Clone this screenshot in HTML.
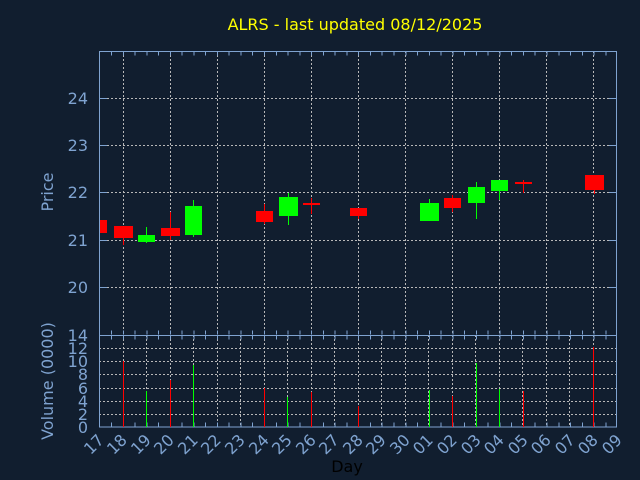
<!DOCTYPE html>
<html><head><meta charset="utf-8"><style>
html,body{margin:0;padding:0;background:#111e2f;}
svg{display:block;font-family:"DejaVu Sans","Liberation Sans",sans-serif;}
</style></head><body>
<svg width="640" height="480" viewBox="0 0 640 480" xmlns="http://www.w3.org/2000/svg">
<rect width="640" height="480" fill="#111e2f"/>
<text x="355" y="30" fill="#ffff00" font-size="16" text-anchor="middle">ALRS - last updated 08/12/2025</text>

<g stroke="#b8b8b8" stroke-width="1" stroke-dasharray="2 2" shape-rendering="crispEdges">
<line x1="99" y1="98.5" x2="617" y2="98.5"/>
<line x1="99" y1="145.5" x2="617" y2="145.5"/>
<line x1="99" y1="192.5" x2="617" y2="192.5"/>
<line x1="99" y1="240.5" x2="617" y2="240.5"/>
<line x1="99" y1="287.5" x2="617" y2="287.5"/>
<line x1="123.5" y1="51" x2="123.5" y2="335"/>
<line x1="170.5" y1="51" x2="170.5" y2="335"/>
<line x1="217.5" y1="51" x2="217.5" y2="335"/>
<line x1="264.5" y1="51" x2="264.5" y2="335"/>
<line x1="311.5" y1="51" x2="311.5" y2="335"/>
<line x1="358.5" y1="51" x2="358.5" y2="335"/>
<line x1="405.5" y1="51" x2="405.5" y2="335"/>
<line x1="452.5" y1="51" x2="452.5" y2="335"/>
<line x1="499.5" y1="51" x2="499.5" y2="335"/>
<line x1="546.5" y1="51" x2="546.5" y2="335"/>
<line x1="593.5" y1="51" x2="593.5" y2="335"/>
<line x1="99" y1="414.5" x2="617" y2="414.5"/>
<line x1="99" y1="401.5" x2="617" y2="401.5"/>
<line x1="99" y1="388.5" x2="617" y2="388.5"/>
<line x1="99" y1="374.5" x2="617" y2="374.5"/>
<line x1="99" y1="361.5" x2="617" y2="361.5"/>
<line x1="99" y1="348.5" x2="617" y2="348.5"/>
<line x1="123.5" y1="335" x2="123.5" y2="427"/><line x1="146.5" y1="335" x2="146.5" y2="427"/>
<line x1="170.5" y1="335" x2="170.5" y2="427"/><line x1="193.5" y1="335" x2="193.5" y2="427"/>
<line x1="217.5" y1="335" x2="217.5" y2="427"/><line x1="240.5" y1="335" x2="240.5" y2="427"/>
<line x1="264.5" y1="335" x2="264.5" y2="427"/><line x1="287.5" y1="335" x2="287.5" y2="427"/>
<line x1="311.5" y1="335" x2="311.5" y2="427"/><line x1="334.5" y1="335" x2="334.5" y2="427"/>
<line x1="358.5" y1="335" x2="358.5" y2="427"/><line x1="381.5" y1="335" x2="381.5" y2="427"/>
<line x1="405.5" y1="335" x2="405.5" y2="427"/><line x1="428.5" y1="335" x2="428.5" y2="427"/>
<line x1="452.5" y1="335" x2="452.5" y2="427"/><line x1="475.5" y1="335" x2="475.5" y2="427"/>
<line x1="499.5" y1="335" x2="499.5" y2="427"/><line x1="522.5" y1="335" x2="522.5" y2="427"/>
<line x1="546.5" y1="335" x2="546.5" y2="427"/><line x1="569.5" y1="335" x2="569.5" y2="427"/>
<line x1="593.5" y1="335" x2="593.5" y2="427"/>
</g>

<g stroke="#7fa3d0" stroke-width="1" fill="none" shape-rendering="crispEdges">
<rect x="99.5" y="51.5" width="517" height="375.5"/>
<line x1="99" y1="335.5" x2="617" y2="335.5"/>
</g>
<g stroke="#7fa3d0" stroke-width="1" shape-rendering="crispEdges">
<line x1="99" y1="53.5" x2="617" y2="53.5" stroke-width="4" stroke-dasharray="1 10.77" stroke-dashoffset="-12"/>
<line x1="99" y1="337.5" x2="617" y2="337.5" stroke-width="4" stroke-dasharray="1 10.77" stroke-dashoffset="-12"/>
<line x1="99" y1="424.5" x2="617" y2="424.5" stroke-width="4" stroke-dasharray="1 10.77" stroke-dashoffset="-12"/>
<line x1="99" y1="332.5" x2="617" y2="332.5" stroke-width="4" stroke-dasharray="1 10.77" stroke-dashoffset="-12"/>
<line x1="100" y1="98.5" x2="107" y2="98.5"/><line x1="100" y1="145.5" x2="107" y2="145.5"/>
<line x1="100" y1="192.5" x2="107" y2="192.5"/><line x1="100" y1="240.5" x2="107" y2="240.5"/>
<line x1="100" y1="287.5" x2="107" y2="287.5"/>
<line x1="609" y1="98.5" x2="616" y2="98.5"/><line x1="609" y1="145.5" x2="616" y2="145.5"/>
<line x1="609" y1="192.5" x2="616" y2="192.5"/><line x1="609" y1="240.5" x2="616" y2="240.5"/>
<line x1="609" y1="287.5" x2="616" y2="287.5"/>
</g>

<g shape-rendering="crispEdges">
<rect x="100" y="220" width="7" height="13" fill="#ff0000"/>
<line x1="123.5" y1="226" x2="123.5" y2="245" stroke="#ff0000"/><rect x="114" y="226" width="19" height="12" fill="#ff0000"/>
<line x1="146.5" y1="227" x2="146.5" y2="243" stroke="#00ff00"/><rect x="138" y="235" width="17" height="7" fill="#00ff00"/>
<line x1="170.5" y1="212" x2="170.5" y2="240" stroke="#ff0000"/><rect x="161" y="228" width="19" height="8" fill="#ff0000"/>
<line x1="193.5" y1="200" x2="193.5" y2="237" stroke="#00ff00"/><rect x="185" y="206" width="17" height="29" fill="#00ff00"/>
<line x1="264.5" y1="204" x2="264.5" y2="224" stroke="#ff0000"/><rect x="256" y="211" width="17" height="11" fill="#ff0000"/>
<line x1="288.5" y1="193" x2="288.5" y2="225" stroke="#00ff00"/><rect x="279" y="197" width="19" height="19" fill="#00ff00"/>
<line x1="311.5" y1="198" x2="311.5" y2="214" stroke="#ff0000"/><rect x="303" y="203" width="17" height="2" fill="#ff0000"/>
<line x1="358.5" y1="208" x2="358.5" y2="219" stroke="#ff0000"/><rect x="350" y="208" width="17" height="8" fill="#ff0000"/>
<line x1="429.5" y1="199" x2="429.5" y2="221" stroke="#00ff00"/><rect x="420" y="203" width="19" height="18" fill="#00ff00"/>
<line x1="452.5" y1="195" x2="452.5" y2="212" stroke="#ff0000"/><rect x="444" y="198" width="17" height="10" fill="#ff0000"/>
<line x1="476.5" y1="182" x2="476.5" y2="219" stroke="#00ff00"/><rect x="468" y="187" width="17" height="16" fill="#00ff00"/>
<line x1="499.5" y1="180" x2="499.5" y2="200" stroke="#00ff00"/><rect x="491" y="180" width="17" height="11" fill="#00ff00"/>
<line x1="523.5" y1="180" x2="523.5" y2="193" stroke="#ff0000"/><rect x="515" y="182" width="17" height="2" fill="#ff0000"/>
<line x1="594.5" y1="175" x2="594.5" y2="194" stroke="#ff0000"/><rect x="585" y="175" width="19" height="15" fill="#ff0000"/>
</g>

<g stroke-width="1" shape-rendering="crispEdges">
<line x1="123.5" y1="361" x2="123.5" y2="427" stroke="#ff0000"/>
<line x1="146.5" y1="391" x2="146.5" y2="427" stroke="#00ff00"/>
<line x1="170.5" y1="380" x2="170.5" y2="427" stroke="#ff0000"/>
<line x1="193.5" y1="365" x2="193.5" y2="427" stroke="#00ff00"/>
<line x1="264.5" y1="388" x2="264.5" y2="427" stroke="#ff0000"/>
<line x1="287.5" y1="397" x2="287.5" y2="427" stroke="#00ff00"/>
<line x1="311.5" y1="392" x2="311.5" y2="427" stroke="#ff0000"/>
<line x1="358.5" y1="406" x2="358.5" y2="427" stroke="#ff0000"/>
<line x1="429.5" y1="390" x2="429.5" y2="427" stroke="#00ff00"/>
<line x1="452.5" y1="396" x2="452.5" y2="427" stroke="#ff0000"/>
<line x1="476.5" y1="363" x2="476.5" y2="427" stroke="#00ff00"/>
<line x1="499.5" y1="389" x2="499.5" y2="427" stroke="#00ff00"/>
<line x1="523.5" y1="391" x2="523.5" y2="427" stroke="#ff0000"/>
<line x1="593.5" y1="347" x2="593.5" y2="427" stroke="#ff0000"/>
</g>

<g fill="#7fa3d0" font-size="16" text-anchor="end">
<text x="88" y="104">24</text>
<text x="88" y="151">23</text>
<text x="88" y="198">22</text>
<text x="88" y="246">21</text>
<text x="88" y="293">20</text>
<text x="88" y="341">14</text>
<text x="88" y="354">12</text>
<text x="88" y="367">10</text>
<text x="88" y="380">8</text>
<text x="88" y="394">6</text>
<text x="88" y="407">4</text>
<text x="88" y="420">2</text>
<text x="88" y="433">0</text>
</g>
<text transform="translate(53,192) rotate(-90)" fill="#7fa3d0" font-size="16" text-anchor="middle">Price</text>
<text transform="translate(53,381) rotate(-90)" fill="#7fa3d0" font-size="16" text-anchor="middle">Volume (0000)</text>

<g fill="#7fa3d0" font-size="16" text-anchor="end">
<text transform="translate(105,441) rotate(-45)">17</text>
<text transform="translate(128,441) rotate(-45)">18</text>
<text transform="translate(152,441) rotate(-45)">19</text>
<text transform="translate(175,441) rotate(-45)">20</text>
<text transform="translate(199,441) rotate(-45)">21</text>
<text transform="translate(222,441) rotate(-45)">22</text>
<text transform="translate(246,441) rotate(-45)">23</text>
<text transform="translate(270,441) rotate(-45)">24</text>
<text transform="translate(293,441) rotate(-45)">25</text>
<text transform="translate(317,441) rotate(-45)">26</text>
<text transform="translate(340,441) rotate(-45)">27</text>
<text transform="translate(364,441) rotate(-45)">28</text>
<text transform="translate(387,441) rotate(-45)">29</text>
<text transform="translate(411,441) rotate(-45)">30</text>
<text transform="translate(434,441) rotate(-45)">01</text>
<text transform="translate(458,441) rotate(-45)">02</text>
<text transform="translate(482,441) rotate(-45)">03</text>
<text transform="translate(505,441) rotate(-45)">04</text>
<text transform="translate(529,441) rotate(-45)">05</text>
<text transform="translate(552,441) rotate(-45)">06</text>
<text transform="translate(576,441) rotate(-45)">07</text>
<text transform="translate(599,441) rotate(-45)">08</text>
<text transform="translate(623,441) rotate(-45)">09</text>
</g>
<text x="347" y="472" fill="#000000" font-size="16" text-anchor="middle">Day</text>
</svg>
</body></html>
